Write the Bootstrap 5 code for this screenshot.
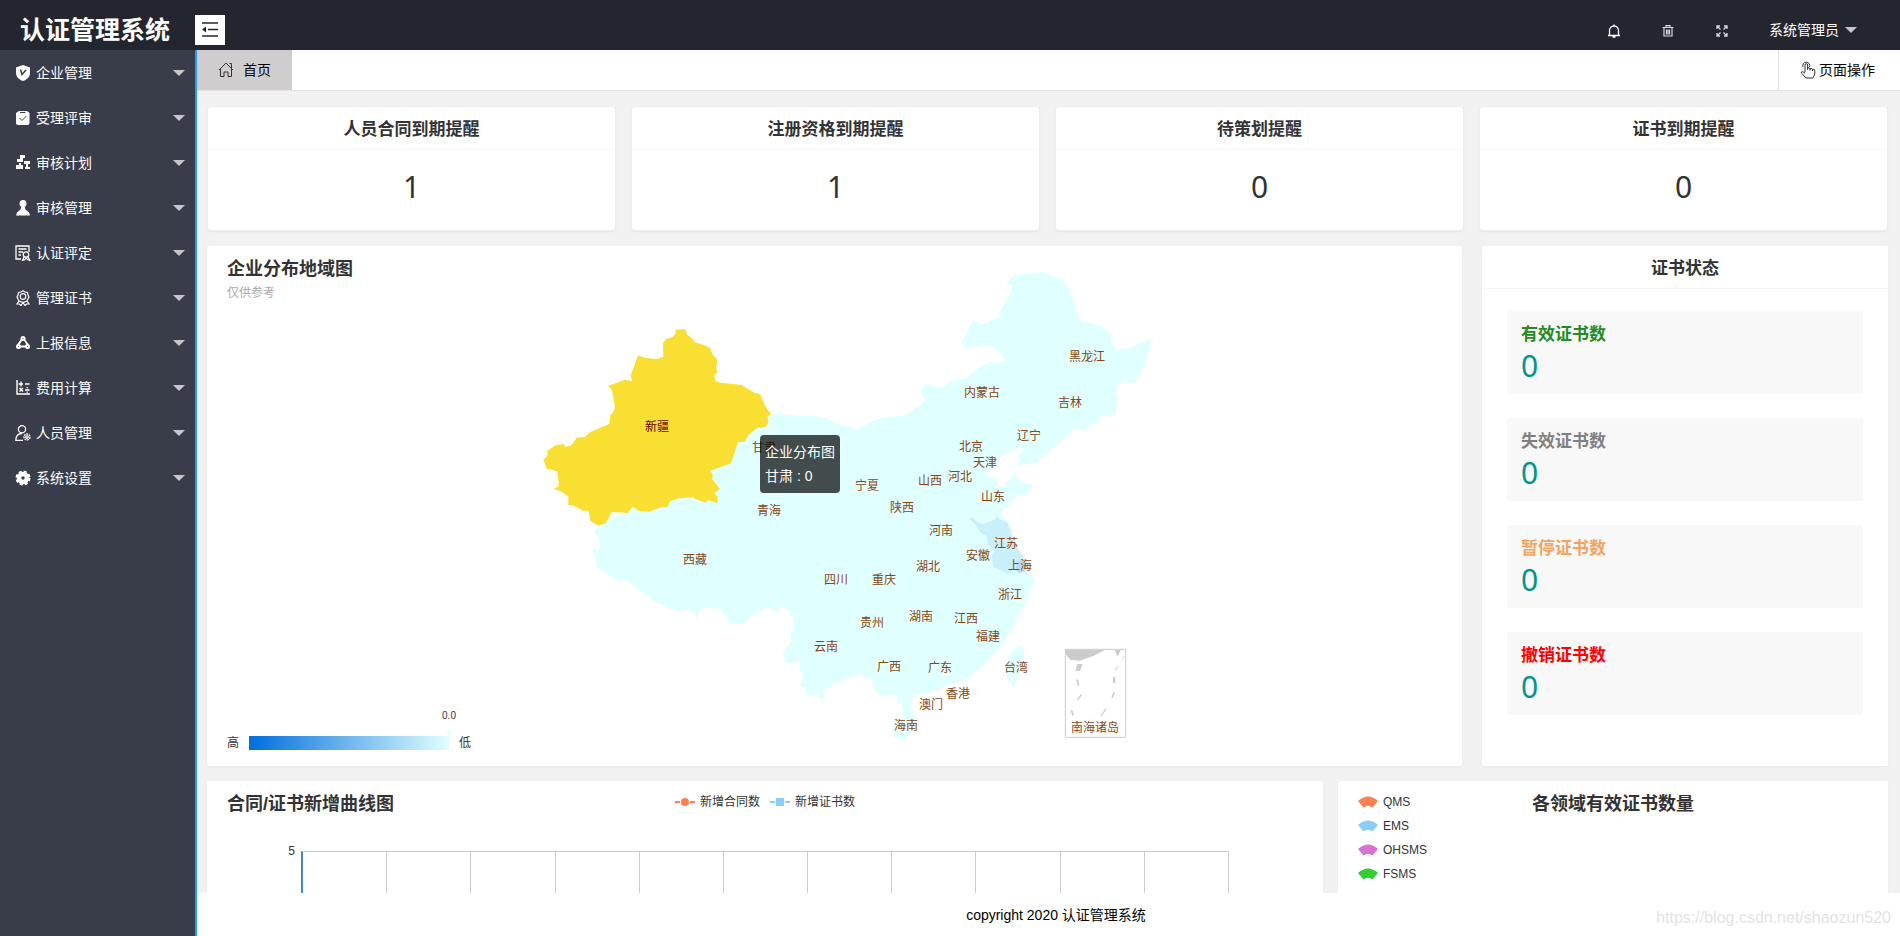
<!DOCTYPE html>
<html lang="zh-CN">
<head>
<meta charset="utf-8">
<meta name="viewport" content="width=device-width, initial-scale=1">
<title>认证管理系统</title>
<link rel="stylesheet" href="https://cdn.jsdelivr.net/npm/bootstrap@5.3.0/dist/css/bootstrap.min.css">
<style>
  body { font-family: "Liberation Sans", "Noto Sans CJK SC", sans-serif; font-size: 14px; line-height: 24px; color: #333; background: #fff; }
  a { text-decoration: none; }
  .topbar { height: 50px; background: #23262e; color: #fff; padding-top: 10px; }
  .brand { width: 195px; padding-left: 20px; font-size: 25px; font-weight: 700; color: #fff; white-space: nowrap; }
  .fold-btn { width: 30px; height: 30px; background: #fff; border: 0; color: #23262e; }
  .tool-btn { width: 54px; background: none; border: 0; color: #fff; padding: 0; }
  .user-btn { background: none; border: 0; color: #fff; padding: 0 43px 0 20px; gap: 6px; }
  .tri { width: 0; height: 0; border: 6px solid transparent; border-top-color: #c4c6ca; border-bottom: 0; }
  .sidebar { width: 197px; background: #393d49; border-right: 2px solid #1e9fff; }
  .sidebar .nav-link { height: 45px; padding: 0 10px 0 15px; color: #fff; gap: 5px; }
  .sidebar svg { width: 16px; height: 16px; }
  .tabbar { height: 41px; background: #fff; border-bottom: 1px solid #e2e2e2; color: #000; }
  .tab-home { width: 95px; background: #d0cdcf; color: #000; gap: 9px; padding-left: 21px; }
  .page-op { width: 122px; background: none; border: 0; border-left: 1px solid #e2e2e2; padding: 0 0 0 21px; gap: 3px; color: #000; }
  .content { background: #f1f1f1; padding: 15px 12px 0 10px; }
  .stats { display: grid; grid-template-columns: repeat(4, 1fr); gap: 15px; }
  .panel { background: #fff; border-radius: 2px; box-shadow: 0 1px 2px rgba(0, 0, 0, .05); }
  .stats .panel { border: 1px solid #ededf5; border-radius: 4px; color: #333; display: block; }
  .panel-head { height: 43px; line-height: 46px; font-size: 17px; font-weight: 700; text-align: center; border-bottom: 1px solid #f6f6f6; margin: 0; }
  .big { font-family: "Noto Sans", sans-serif; font-size: 30px; line-height: 36px; }
  .stats .big { height: 80px; line-height: 74px; text-align: center; }
  .row-map { display: grid; grid-template-columns: 1255fr 406fr; gap: 20px; margin-top: 15px; }
  .row-chart { display: grid; grid-template-columns: 1116fr 550fr; gap: 15px; margin-top: 15px; }
  .stacked { display: grid; }
  .stacked > * { grid-area: 1 / 1; }
  .stacked > svg { width: 100%; height: auto; display: block; }
  .map-title { padding: 11px 20px; }
  .subtitle { color: #aaa; }
  .chart-title { font-size: 18px; line-height: 24px; font-weight: 700; margin: 0; }
  .tiny { font-size: 12px; line-height: 16px; }
  .scale-legend { padding: 0 0 15px 20px; gap: 10px; }
  .scale-bar { width: 200px; height: 14px; background: linear-gradient(90deg, #006edd, #e0ffff); position: relative; }
  .scale-mark { position: absolute; right: -8px; bottom: 15px; width: 16px; font-size: 10px; line-height: 12px; text-align: center; }
  .scale-mark::after { content: ""; display: block; margin: 9px auto 0; width: 0; height: 0; border: 4px solid transparent; border-top-color: #e0ffff; border-bottom: 0; }
  .state-list { padding: 22px 25px 51px; display: grid; gap: 24px; }
  .state { background: #f8f8f8; border-radius: 2px; height: 83px; padding: 12px 14px; }
  .state h3 { font-size: 17px; line-height: 24px; font-weight: 700; margin: 0; }
  .state .big { color: #009688; line-height: 38px; }
  .is-valid-cert { color: #228b22; }
  .is-expired-cert { color: #808080; }
  .is-paused-cert { color: #f4a460; }
  .is-revoked-cert { color: #f00; }
  .map-label text { font-size: 12px; text-anchor: middle; fill: #8b4513; }
  .map-label .active-area { fill: #640000; }
  .chart-box { height: 300px; padding: 11px 20px; }
  .chart-head { display: grid; grid-template-columns: 1fr auto 1fr; }
  .series { gap: 10px; height: 20px; }
  .series span { display: flex; align-items: center; gap: 5px; }
  .plot { margin: 35px 74px 0; display: grid; grid-template-columns: repeat(11, 1fr); height: 240px; border-top: 1px solid #ccc; position: relative; border-left: 2px solid #48b; }
  .plot i { border-right: 1px solid #ccc; }
  .plot .tick { position: absolute; right: 100%; top: -9px; padding-right: 8px; }
  .fields { gap: 8px; padding-top: 2px; margin: 0; }
  .fields li { display: flex; align-items: center; gap: 5px; }
  .foot { height: 43px; color: #000; background: #fff; padding-left: 15px; position: relative; z-index: 1; }
  .watermark { position: absolute; right: 9px; top: 13px; font-size: 16px; color: #e3e3e3; }
</style>
</head>
<body class="vh-100 d-flex flex-column overflow-hidden">
<svg class="d-none"><defs>
  <path id="fan" d="M0 5Q10 -4 20 5L14.500 11.500Q10 8 5.500 11.500Z"/>
</defs></svg>

<header class="topbar d-flex align-items-center flex-shrink-0">
  <a class="brand" href="#">认证管理系统</a>
  <button class="fold-btn d-flex align-items-center justify-content-center" aria-label="收起菜单">
    <svg width="18" height="16" viewBox="0 0 18 16" fill="none" stroke="currentColor" stroke-width="1.600"><path d="M1 1H17M7 7.500H17M1 14H17"/><path d="M1 7.500L5 4.500V10.500Z" fill="currentColor" stroke="none"/></svg>
  </button>
  <div class="d-flex align-items-center ms-auto">
    <button class="tool-btn" aria-label="消息"><svg width="14" height="14" viewBox="0 0 14 14" fill="none" stroke="currentColor" stroke-width="1.300"><path d="M1 11.500H13M2.500 11.500V6.500a4.500 4.500 0 0 1 9 0V11.500M7 2V.5M5.500 13h3"/></svg></button>
    <button class="tool-btn" aria-label="清除缓存"><svg width="12" height="12" viewBox="0 0 12 12" fill="none" stroke="#d8d8da" stroke-width="1.200"><path d="M.5 2.500h11M4 2V.7h4V2M2 3v8h8V3M4.500 4.500v5M6 4.500v5M7.500 4.500v5"/></svg></button>
    <button class="tool-btn" aria-label="全屏"><svg width="12" height="12" viewBox="0 0 12 12" fill="none" stroke="#d8d8da" stroke-width="1.300"><path d="M1 4V1H4M1 1L4.500 4.500M8 1h3v3M11 1L7.500 4.500M1 8v3h3M1 11L4.500 7.500M11 8v3H8M11 11L7.500 7.500"/></svg></button>
    <button class="user-btn d-flex align-items-center">系统管理员<span class="tri"></span></button>
  </div>
</header>

<div class="d-flex flex-grow-1 overflow-hidden">
  <nav class="sidebar nav flex-column flex-nowrap flex-shrink-0">
    <a class="nav-link d-flex align-items-center" href="#"><svg viewBox="0 0 16 16"><path fill="#fff" d="M8 0L15 2.500V8c0 4-3 6.500-7 8C4 14.500 1 12 1 8V2.500Z"/><path d="M5.500 4.500L7 9.500L11 5" fill="none" stroke="#393d49" stroke-width="1.500"/></svg>企业管理<span class="tri ms-auto"></span></a>
    <a class="nav-link d-flex align-items-center" href="#"><svg viewBox="0 0 16 16"><path fill="#fff" d="M4 1H12L14.500 3V13a2 2 0 0 1-2 2H3a2 2 0 0 1-2-2V3Z"/><path d="M5 2.500H10.500M4.500 8L7 10.500L11.500 6" fill="none" stroke="#393d49" stroke-width="1"/></svg>受理评审<span class="tri ms-auto"></span></a>
    <a class="nav-link d-flex align-items-center" href="#"><svg viewBox="0 0 16 16" fill="#fff"><path d="M5 0H10V3H8V4H5ZM2 4H8V7H2ZM9 6H15V9H13V12H15V14H10V12H11V9H9ZM4 8H6V10H8V14H1V10H4Z"/></svg>审核计划<span class="tri ms-auto"></span></a>
    <a class="nav-link d-flex align-items-center" href="#"><svg viewBox="0 0 16 16" fill="#fff"><circle cx="8" cy="3.500" r="3.500"/><path d="M6.500 6H9.500L10.500 9.500L14 12.500L15 15.500H1L2 12.500L5.500 9.500Z"/></svg>审核管理<span class="tri ms-auto"></span></a>
    <a class="nav-link d-flex align-items-center" href="#"><svg viewBox="0 0 16 16" fill="none" stroke="#fff" stroke-width="1.300"><path d="M6 14H1V1H14V7M3.500 4H11.500M3.500 7H8M3.500 10H6"/><circle cx="11" cy="9.500" r="2.700"/><path d="M9 12L7.500 15.500L10 14.500L11 13L12.500 14.500L15 15.500L13 12"/></svg>认证评定<span class="tri ms-auto"></span></a>
    <a class="nav-link d-flex align-items-center" href="#"><svg viewBox="0 0 16 16" fill="none" stroke="#fff" stroke-width="1.200"><path d="M8 .8L10 2L12.500 2.500L13 5L14 7L13 9L12 11L8 12.500L4 11L3 9L2 7L3 5L3.500 2.500L6 2ZM4 11L2 14L4.500 14L6 15.500L8 12.500L10 15.500L11.500 14H14L12 11"/><circle cx="8" cy="6.500" r="2.800"/></svg>管理证书<span class="tri ms-auto"></span></a>
    <a class="nav-link d-flex align-items-center" href="#"><svg viewBox="0 0 16 16" fill="none" stroke="#fff" stroke-width="2"><circle cx="8" cy="3.500" r="1.500"/><circle cx="3.500" cy="11.500" r="1.500"/><circle cx="12.500" cy="11.500" r="1.500"/><path d="M6.800 4.500L3 10M9.200 4.500L13 10M5 11.500H11"/></svg>上报信息<span class="tri ms-auto"></span></a>
    <a class="nav-link d-flex align-items-center" href="#"><svg viewBox="0 0 16 16" fill="none" stroke="#fff" stroke-width="1.400"><path d="M2 0V14H15M3.500 4H8M6 1.500V6.500M10 4H14.500M4.500 8L8 11.500M8 8L4.500 11.500M10 10H14.500M12.200 7V8.300M12.200 11.500V12.800"/></svg>费用计算<span class="tri ms-auto"></span></a>
    <a class="nav-link d-flex align-items-center" href="#"><svg viewBox="0 0 16 16" fill="none" stroke="#fff" stroke-width="1.300"><circle cx="7" cy="4.300" r="3.600"/><path d="M8 15.300H.8C.8 11 3 8.500 7 8.500"/><circle cx="12" cy="12" r="3" stroke-dasharray="2 .6"/><circle cx="12" cy="12" r="1.200"/></svg>人员管理<span class="tri ms-auto"></span></a>
    <a class="nav-link d-flex align-items-center" href="#"><svg viewBox="0 0 16 16"><circle cx="8" cy="8" r="4" fill="none" stroke="#fff" stroke-width="4.500"/><circle cx="8" cy="8" r="6.500" fill="none" stroke="#fff" stroke-width="2" stroke-dasharray="3.100 2"/></svg>系统设置<span class="tri ms-auto"></span></a>
  </nav>

  <div class="d-flex flex-column flex-grow-1 overflow-hidden">
    <div class="tabbar d-flex flex-shrink-0">
      <a class="tab-home d-flex align-items-center" href="#"><svg width="16" height="16" viewBox="0 0 16 16" fill="none" stroke="#333"><path d="M1 8L8 1L15 8M11.500 1.500H13.500V6M2.500 7V14.500H6V10H10V14.500H13.500V7"/></svg>首页</a>
      <button class="page-op ms-auto d-flex align-items-center"><svg width="16" height="18" viewBox="0 0 16 18" fill="none" stroke="#333"><path d="M5 11V4a1.300 1.300 0 0 1 2.600 0V9M7.600 8a1.200 1.200 0 0 1 2.400 0V9.500M10 8.500a1.200 1.200 0 0 1 2.400 0V10M12.400 9.500a1.200 1.200 0 0 1 2.400 0V13L13 17H6L1 11.500Q2 9.500 5 12M3 6a3.500 3.500 0 1 1 6.500 0"/></svg>页面操作</button>
    </div>

    <main class="content flex-grow-1 overflow-hidden">
      <section class="stats">
        <a class="panel" href="#"><h2 class="panel-head">人员合同到期提醒</h2><div class="big">1</div></a>
        <a class="panel" href="#"><h2 class="panel-head">注册资格到期提醒</h2><div class="big">1</div></a>
        <a class="panel" href="#"><h2 class="panel-head">待策划提醒</h2><div class="big">0</div></a>
        <a class="panel" href="#"><h2 class="panel-head">证书到期提醒</h2><div class="big">0</div></a>
      </section>

      <section class="row-map">
        <div class="panel stacked">
          <svg viewBox="207 246 1255 520" role="img" aria-label="企业分布地域图">
            <g fill="#e0ffff">
              <polygon transform="translate(520 310) scale(.33333)" points="753,313 780,311 838,318 885,317 915,324 918,332 945,338 968,349 995,350 1020,600 1020,990 816,990 823,975 820,920 810,918 808,897 787,880 775,908 745,892 722,892 700,907 690,915 678,938 627,945 624,922 607,912 605,898 580,895 553,891 537,905 530,928 524,905 496,899 488,905 462,900 445,895 425,882 410,882 388,860 372,853 345,832 325,812 303,808 300,815 270,798 252,785 230,770 226,742 215,722 225,713 235,725 241,712 238,690 224,668 228,655 240,646 400,560 560,480 700,340"/>
              <polygon transform="translate(740 400) scale(.33333)" points="92,42 180,48 225,47 260,55 300,76 330,80 350,88 405,60 443,50 490,47 525,25 545,12 555,0 600,-20 960,-60 990,108 975,115 930,150 915,170 898,175 890,190 848,192 832,203 838,175 830,172 850,150 860,125 850,122 828,130 805,155 785,170 768,200 745,215 730,212 742,228 765,235 775,262 795,257 825,215 830,232 850,250 875,253 875,270 855,285 830,285 822,300 780,335 792,352 810,375 825,425 848,465 858,490 872,508 862,520 885,540 870,570 862,600 835,650 830,655 820,690 795,710 800,718 780,740 740,785 715,810 700,820 690,835 640,850 600,868 560,880 520,886 512,920 524,945 490,947 486,915 472,905 470,885 440,885 415,882 400,860 395,835 370,835 362,815 345,828 315,840 275,850 270,865 250,872 255,895 240,900 238,880 215,888 200,882 195,860 180,862 190,820 178,812 180,785 145,790 135,780 128,765 140,740 155,725 150,700 163,690 162,650 155,630 145,632 128,612 118,635 80,622 60,635 20,655 15,668 0,670 0,200"/>
              <polygon transform="translate(900 260) scale(.33333)" points="0,473 25,465 45,445 78,425 62,398 75,372 127,383 155,362 200,355 235,325 270,305 295,308 315,303 300,275 270,255 245,257 200,265 183,248 195,230 218,184 250,192 295,172 300,155 330,98 338,75 318,68 345,45 430,35 465,52 490,62 508,85 515,105 530,155 545,187 590,192 610,205 633,222 635,245 645,266 690,265 712,252 745,242 763,238 745,258 755,262 740,285 735,315 703,371 672,362 648,380 653,440 645,455 632,472 612,465 590,490 560,500 555,515 520,503 500,530 470,555 430,590 375,560 250,600 0,600"/>
              <polygon transform="translate(880 500) scale(.33333)" points="45,660 60,658 85,645 105,648 110,670 95,700 70,720 45,715 38,690"/>
              <polygon transform="translate(880 500) scale(.33333)" points="395,455 420,437 433,445 430,480 415,530 400,565 395,548 380,535 378,505"/>
            </g>
            <polygon fill="#c8effa" transform="translate(880 500) scale(.33333)" points="268,58 275,52 290,65 310,72 320,68 345,58 350,48 360,58 380,65 390,90 400,125 425,165 440,185 437,195 410,205 385,222 370,215 340,200 335,165 345,150 325,135 320,108 300,95 285,72"/>
            <polygon fill="#b5def8" transform="translate(880 500) scale(.33333)" points="410,185 425,180 440,195 435,215 415,220 408,210"/>
            <polygon fill="#fadf33" transform="translate(520 310) scale(.33333)" points="467,59 497,58 500,72 515,85 525,97 550,104 570,114 577,132 590,147 592,160 588,172 592,185 583,197 587,214 606,218 665,225 703,248 720,252 737,290 753,313 742,321 746,335 738,350 720,354 716,351 700,363 683,378 675,395 654,397 633,460 570,483 578,492 577,508 600,537 583,550 593,560 592,579 564,571 557,578 525,566 520,562 478,565 450,574 443,590 420,593 388,605 358,603 338,591 324,609 275,606 258,640 234,647 211,632 206,602 188,602 162,587 145,585 145,560 125,545 102,537 117,527 112,485 92,478 80,476 70,449 82,438 82,422 108,405 130,402 137,411 154,406 170,383 195,381 210,367 268,341 271,315 280,305 285,293 276,240 264,228 315,209 337,214 332,197 354,136 374,143 410,147 430,140 429,98 437,88 458,81 467,70"/>
            <g transform="translate(880 500) scale(.33333)" fill="#ccc">
              <path d="M556 448H737V712H556Z" fill="none" stroke="#ccc" stroke-width="3"/>
              <path d="M556 450H675L640 468L600 482L572 480L556 462ZM704 450H722L713 470ZM592 492H608L600 512L586 514ZM588 540L594 538L598 556L594 558ZM590 598L604 583L606 586L594 600ZM572 630H577L581 646L577 648ZM732 468H735L722 486ZM704 510L713 498L715 500L706 512ZM699 530H706V549H699ZM694 592L700 577L706 578L698 594ZM661 648L677 625L680 627L664 650Z"/>
            </g>
            <g class="map-label">
              <text x="1087" y="361">黑龙江</text><text x="982" y="397">内蒙古</text><text x="1070" y="407">吉林</text><text x="1029" y="440">辽宁</text>
              <text x="971" y="451">北京</text><text x="985" y="467">天津</text><text x="960" y="481">河北</text><text x="930" y="485">山西</text>
              <text x="993" y="501">山东</text><text x="941" y="535">河南</text><text x="902" y="512">陕西</text><text x="867" y="490">宁夏</text>
              <text x="769" y="515">青海</text><text x="657" y="431" class="active-area">新疆</text><text x="764" y="452">甘肃</text><text x="695" y="564">西藏</text>
              <text x="836" y="584">四川</text><text x="884" y="584">重庆</text><text x="928" y="571">湖北</text><text x="978" y="560">安徽</text>
              <text x="1006" y="548">江苏</text><text x="1020" y="570">上海</text><text x="1010" y="599">浙江</text><text x="921" y="621">湖南</text>
              <text x="966" y="623">江西</text><text x="872" y="627">贵州</text><text x="988" y="641">福建</text><text x="826" y="651">云南</text>
              <text x="889" y="671">广西</text><text x="940" y="672">广东</text><text x="1016" y="672">台湾</text><text x="958" y="698">香港</text>
              <text x="931" y="709">澳门</text><text x="906" y="730">海南</text><text x="1095" y="732">南海诸岛</text>
            </g>
            <rect x="760" y="435" width="80" height="58" rx="4" fill="#000" fill-opacity=".7"/>
            <text fill="#fff" font-size="14"><tspan x="765" y="457">企业分布图</tspan><tspan x="765" y="481">甘肃 : 0</tspan></text>
          </svg>
          <div class="map-title align-self-start">
            <h2 class="chart-title">企业分布地域图</h2>
            <div class="subtitle tiny mt-1">仅供参考</div>
          </div>
          <div class="scale-legend tiny d-flex align-items-center align-self-end">高<div class="scale-bar"><div class="scale-mark">0.0</div></div>低</div>
        </div>

        <div class="panel">
          <h2 class="panel-head">证书状态</h2>
          <div class="state-list">
            <div class="state"><h3 class="is-valid-cert">有效证书数</h3><div class="big">0</div></div>
            <div class="state"><h3 class="is-expired-cert">失效证书数</h3><div class="big">0</div></div>
            <div class="state"><h3 class="is-paused-cert">暂停证书数</h3><div class="big">0</div></div>
            <div class="state"><h3 class="is-revoked-cert">撤销证书数</h3><div class="big">0</div></div>
          </div>
        </div>
      </section>

      <section class="row-chart">
        <div class="panel chart-box">
          <div class="chart-head">
            <h2 class="chart-title">合同/证书新增曲线图</h2>
            <div class="series tiny d-flex">
              <span><svg width="20" height="8" viewBox="0 0 20 8"><path d="M0 4H5M15 4H20" stroke="#ff7f50" stroke-width="2"/><circle cx="10" cy="4" r="4" fill="#ff7f50"/></svg>新增合同数</span>
              <span><svg width="20" height="8" viewBox="0 0 20 8"><path d="M0 4H5M15 4H20" stroke="#87cefa" stroke-width="2"/><path d="M6 0H14V8H6Z" fill="#87cefa"/></svg>新增证书数</span>
            </div>
          </div>
          <div class="plot"><span class="tick tiny">5</span><i></i><i></i><i></i><i></i><i></i><i></i><i></i><i></i><i></i><i></i><i></i></div>
        </div>
        <div class="panel chart-box stacked">
          <h2 class="chart-title text-center">各领域有效证书数量</h2>
          <ul class="fields tiny list-unstyled d-flex flex-column">
            <li><svg width="20" height="12" viewBox="0 0 20 12" fill="#ff7f50"><use href="#fan"/></svg>QMS</li>
            <li><svg width="20" height="12" viewBox="0 0 20 12" fill="#87cefa"><use href="#fan"/></svg>EMS</li>
            <li><svg width="20" height="12" viewBox="0 0 20 12" fill="#da70d6"><use href="#fan"/></svg>OHSMS</li>
            <li><svg width="20" height="12" viewBox="0 0 20 12" fill="#32cd32"><use href="#fan"/></svg>FSMS</li>
          </ul>
        </div>
      </section>
    </main>

    <footer class="foot d-flex align-items-center justify-content-center flex-shrink-0">copyright 2020 认证管理系统<span class="watermark">https://blog.csdn.net/shaozun520</span></footer>
  </div>
</div>
<script src="https://cdn.jsdelivr.net/npm/bootstrap@5.3.0/dist/js/bootstrap.bundle.min.js"></script>
</body>
</html>
